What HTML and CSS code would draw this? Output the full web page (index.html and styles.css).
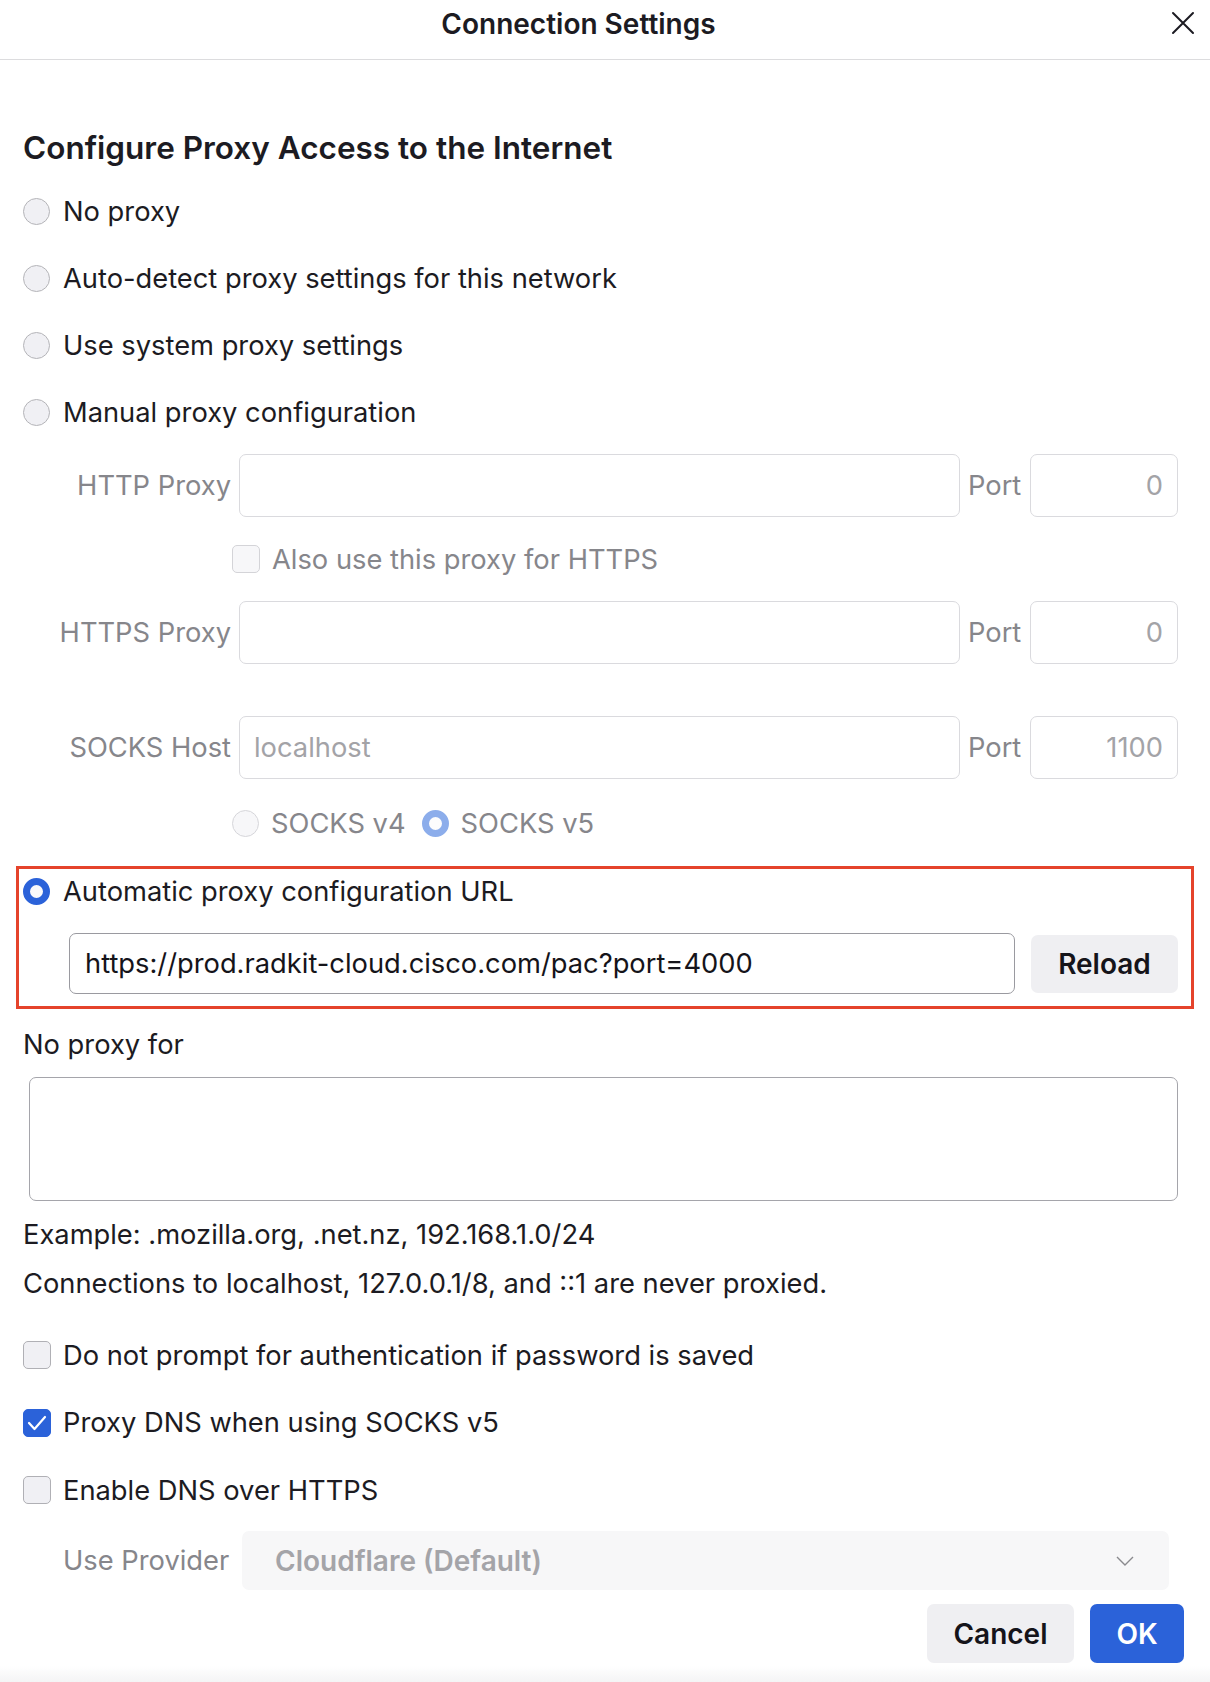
FILE: index.html
```html
<!DOCTYPE html>
<html lang="en">
<head>
<meta charset="utf-8">
<title>Connection Settings</title>
<link rel="stylesheet" href="styles.css">
</head>
<body>
<div class="dialog">
  <header class="titlebar">
    <h1 class="title">Connection Settings</h1>
    <button class="close" aria-label="Close">
      <svg width="26" height="26" viewBox="0 0 26 26"><path d="M3 3 L23 23 M23 3 L3 23" stroke="#1c1b22" stroke-width="2" fill="none" stroke-linecap="round"/></svg>
    </button>
  </header>
  <main class="content">
    <h2 class="heading">Configure Proxy Access to the Internet</h2>
    <div class="options">
      <div class="opt"><span class="radio"></span><span>No proxy</span></div>
      <div class="opt"><span class="radio"></span><span>Auto-detect proxy settings for this network</span></div>
      <div class="opt"><span class="radio"></span><span>Use system proxy settings</span></div>
      <div class="opt"><span class="radio"></span><span>Manual proxy configuration</span></div>
    </div>

    <div class="manual">
      <div class="frow">
        <span class="flabel">HTTP Proxy</span>
        <span class="field"></span>
        <span class="plabel">Port</span>
        <span class="field port">0</span>
      </div>
      <div class="subrow sub-https">
        <span class="check disabled"></span><span class="dim">Also use this proxy for HTTPS</span>
      </div>
      <div class="frow">
        <span class="flabel">HTTPS Proxy</span>
        <span class="field"></span>
        <span class="plabel">Port</span>
        <span class="field port">0</span>
      </div>
      <div class="frow socks">
        <span class="flabel">SOCKS Host</span>
        <span class="field">localhost</span>
        <span class="plabel">Port</span>
        <span class="field port">1100</span>
      </div>
      <div class="subrow sub-socks">
        <span class="radio disabled"></span><span class="dim">SOCKS v4</span>
        <span class="radio disabled-checked"></span><span class="dim">SOCKS v5</span>
      </div>
    </div>

    <div class="highlight">
      <div class="opt auto"><span class="radio checked"></span><span>Automatic proxy configuration URL</span></div>
      <div class="urlrow">
        <span class="urlfield">https://prod.radkit-cloud.cisco.com/pac?port=4000</span>
        <button class="btn reload">Reload</button>
      </div>
    </div>

    <div class="noproxy-label">No proxy for</div>
    <div class="textarea"></div>
    <p class="note note-first">Example: .mozilla.org, .net.nz, 192.168.1.0/24</p>
    <p class="note">Connections to localhost, 127.0.0.1/8, and ::1 are never proxied.</p>

    <div class="checks">
      <div class="opt"><span class="check"></span><span>Do not prompt for authentication if password is saved</span></div>
      <div class="opt"><span class="check checked"><svg width="20" height="16" viewBox="0 0 20 16"><path d="M2 8 L7.5 14 L18 2" stroke="#fff" stroke-width="2.2" fill="none" stroke-linecap="round" stroke-linejoin="round"/></svg></span><span>Proxy DNS when using SOCKS v5</span></div>
      <div class="opt"><span class="check"></span><span>Enable DNS over HTTPS</span></div>
    </div>

    <div class="provider">
      <span class="provlabel">Use Provider</span>
      <div class="select">
        <span>Cloudflare (Default)</span>
        <svg width="18" height="10" viewBox="0 0 18 10"><path d="M1 1 L9 9 L17 1" stroke="#8a8a8e" stroke-width="1.4" fill="none"/></svg>
      </div>
    </div>

    <div class="actions">
      <button class="btn cancel">Cancel</button>
      <button class="btn ok">OK</button>
    </div>
  </main>
</div>
</body>
</html>
```

FILE: styles.css
```css
* { box-sizing: border-box; }
html, body { margin: 0; padding: 0; background: #fff; }
body {
  font-family: Inter, "Noto Sans", sans-serif;
  font-size: 27.3px;
  color: #1c1b22;
}
.dialog {
  width: 1210px; height: 1682px; overflow: hidden;
  background: linear-gradient(to bottom, #fff 1666px, #f4f4f5 1682px);
}

.titlebar {
  height: 60px;
  border-bottom: 1px solid #dcdcde;
  display: flex;
  align-items: flex-start;
  justify-content: center;
  padding: 6px 53px 0 0;
  position: relative;
}
.title { margin: 0; font-size: 28px; line-height: 36px; font-weight: 600; }
.close {
  position: absolute; right: 14px; top: 10px;
  background: none; border: 0; padding: 0; width: 26px; height: 26px;
}

.content { padding: 0 32px 0 23px; }
.heading {
  margin: 71px 0 0; font-size: 31.5px; font-weight: 600; line-height: 34px;
}
.options { margin-top: 13px; }
.opt { display: flex; align-items: center; height: 67px; gap: 13px; }

.radio {
  width: 27px; height: 27px; border-radius: 50%;
  border: 1px solid #b4b4b8; background: #f0f0f4; flex: none;
}
.radio.checked { border: 7px solid #2b62d9; background: #f9f9fb; }
.radio.disabled { border-color: #d6d6da; background: #f7f7f9; }
.radio.disabled-checked { border: 7px solid #8cadeb; background: #fcfcfd; }

.check {
  width: 28px; height: 28px; border-radius: 5px;
  border: 1px solid #b0b0b5; background: #f0f0f4; flex: none;
  display: flex; align-items: center; justify-content: center;
}
.check.checked { background: #2b62d9; border-color: #2b62d9; }
.check.disabled { border-color: #d4d4d8; background: #f7f7f9; }

.manual { margin-top: 8px; }
.frow {
  display: grid;
  grid-template-columns: 208px 1fr 54px 148px;
  column-gap: 8px;
  align-items: center;
  height: 63px;
}
.frow.socks { margin-top: 52px; }
.flabel { text-align: right; color: #86868b; white-space: nowrap; }
.plabel { color: #86868b; }
.dim { color: #86868b; }
.field {
  height: 63px; border: 1px solid #dadade; border-radius: 7px;
  display: flex; align-items: center; padding: 0 14px; color: #a3a3a7;
}
.field.port { justify-content: flex-end; }
.subrow { display: flex; align-items: center; gap: 12px; padding-left: 209px; }
.sub-https { height: 28px; margin: 28px 0; }
.sub-socks { height: 27px; margin-top: 31px; }
.sub-socks .dim + .radio { margin-left: 4px; }

.highlight {
  margin: 29px -16px 0 -7px;
  border: 3px solid #e5432b;
  padding: 5px 13px 12px 4px;
}
.opt.auto { height: 34px; }
.urlrow { display: flex; align-items: center; gap: 16px; margin-top: 25px; padding-left: 46px; }
.urlfield {
  flex: 1; height: 61px; border: 1px solid #9a9aa0; border-radius: 7px;
  display: flex; align-items: center; padding: 0 15px; color: #15141a;
}
.btn {
  font-family: inherit; font-size: 28px; font-weight: 600; border: 0; border-radius: 7px;
  color: #15141a;
}
.reload { width: 147px; height: 58px; background: #efeff2; }

.noproxy-label { margin-top: 19px; line-height: 34px; }
.textarea {
  margin: 15px 0 0 6px; height: 124px; border: 1px solid #a5a5ab; border-radius: 7px;
}
.note { margin: 0; line-height: 34px; }
.note-first { margin-top: 17px; }
.note + .note { margin-top: 14.5px; }

.checks { margin-top: 21px; }
.checks .opt { height: 67.5px; gap: 12px; }

.provider {
  display: flex; align-items: center; justify-content: space-between;
  margin-top: 7px; padding: 0 9px 0 40px;
}
.provlabel { color: #86868b; white-space: nowrap; }
.select {
  width: 927px; height: 59px; background: #f7f7f8; border-radius: 7px;
  display: flex; align-items: center; justify-content: space-between;
  padding: 0 35px 0 33px; color: #a4a4a8; font-weight: 600; font-size: 28px;
}

.actions { display: flex; justify-content: flex-end; gap: 16px; margin: 14px -6px 0 0; }
.cancel { width: 147px; height: 59px; background: #efeff2; }
.ok { width: 94px; height: 59px; background: #2b62d9; color: #fff; }
```
